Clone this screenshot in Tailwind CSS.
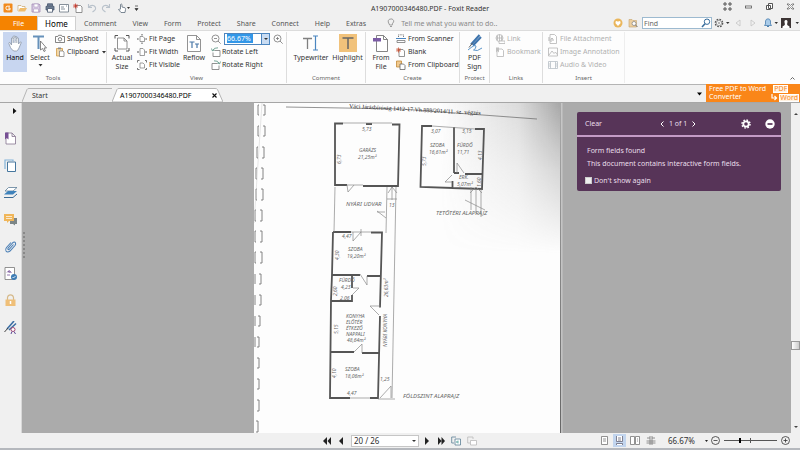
<!DOCTYPE html>
<html lang="en">
<head>
    <meta charset="UTF-8">
    <meta name="viewport" content="width=device-width, initial-scale=1.0">
    <title>A1907000346480.PDF - Foxit Reader</title>
    <script src="https://cdn.jsdelivr.net/npm/@tailwindcss/browser@4"></script>
</head>
<body class="h-screen flex flex-col overflow-hidden bg-[#f0f0f0] font-['Noto_Sans',sans-serif] text-[7px] leading-[9px] text-[#333]">

    <!-- Title bar -->
    <header class="flex h-4 shrink-0 items-center">
        <div class="flex flex-1 items-center gap-[4px] pl-[3px]">
            <svg class="w-[10px] h-[10px]" viewBox="0 0 10 10"><rect x="0.5" y="0.5" width="9" height="9" rx="1" fill="#f28a1c"/><path d="M7 3.2H4.2Q3 3.2 3 4.5v1Q3 6.8 4.2 6.8H7V5H5.2" fill="none" stroke="#fff"/></svg>
            <button aria-label="Open"><svg class="w-[10px] h-[10px]" viewBox="0 0 10 10"><path d="M1 8V2.5h3l1 1h3V5" fill="#fff" stroke="#c9a56a" stroke-width=".7"/><path d="M1 8.5L3 5h7L8 8.5z" fill="#f0bd6c"/></svg></button>
            <button aria-label="Save"><svg class="w-[10px] h-[10px]" viewBox="0 0 10 10"><path d="M1 1h7l1 1v7H1z" fill="#d9cce4" stroke="#a28bb5" stroke-width=".8"/><path d="M3 1h4v3H3zM2.5 6h5v3h-5z" fill="#fff" stroke="#a28bb5" stroke-width=".5"/></svg></button>
            <button aria-label="Print"><svg class="w-[10px] h-[10px]" viewBox="0 0 10 10"><path d="M2.5 3V.8h5V3M1 7V3.3h8V7z" fill="#6d7d92" stroke="#46566c" stroke-width=".8"/><path d="M2.5 5.5h5v3.7h-5z" fill="#fff" stroke="#46566c" stroke-width=".8"/></svg></button>
            <button aria-label="Email"><svg class="w-[10px] h-[10px]" viewBox="0 0 10 10"><path d="M.5 1.5h9v7.500h-9zM2 4h3M2 6h4M7 3h1" fill="#fff" stroke="#687480" stroke-width=".8"/></svg></button>
            <button aria-label="New"><svg class="w-[10px] h-[10px]" viewBox="0 0 10 10"><path d="M3 2.500h4.500l1.500 1.500v5.500H3z" fill="#fff" stroke="#777" stroke-width=".8"/><path d="M2.500.5v5M0 3h5M.8 1.200l3.500 3.500M4.300 1.200L.8 4.700" stroke="#c8392b" stroke-width=".8"/></svg></button>
            <button aria-label="Undo"><svg class="w-[10px] h-[10px]" viewBox="0 0 10 10"><path d="M1.500 1v3.500H5M1.800 4.300Q4 1.500 7 2.800Q10 5 7.500 7.500L5.500 9" fill="none" stroke="#b9c2cb" stroke-width="1.100"/></svg></button>
            <button aria-label="Redo"><svg class="w-[10px] h-[10px]" viewBox="0 0 10 10"><path d="M8.500 1v3.500H5M8.200 4.300Q6 1.500 3 2.800Q0 5 2.500 7.500L4.500 9" fill="none" stroke="#b9c2cb" stroke-width="1.100"/></svg></button>
            <button aria-label="Touch mode" class="ml-[2px]"><svg class="w-[13px] h-[10px]" viewBox="0 0 13 10"><path d="M3.500 6V1.500q.8-1 1.500 0V4l3 .8q.8.500.5 1.700L8 9.500H4L1.500 6.500q.3-1 2 .3" fill="#fff" stroke="#5d6c7b" stroke-width=".8"/><path d="M10 4h3l-1.500 2z" fill="#333"/></svg></button>
            <button aria-label="Customize toolbar"><svg class="w-[5px] h-[8px]" viewBox="0 0 5 8"><path d="M1 2h3M1 4.500h3L2.500 6.500z" fill="#333" stroke="#333" stroke-width=".7"/></svg></button>
        </div>
        <h1 class="pl-[62px]">A1907000346480.PDF - Foxit Reader</h1>
        <div class="flex flex-1 items-center justify-end gap-[12px] pr-[5px] pb-[3px]">
            <button aria-label="Ribbon mode"><svg class="w-[9px] h-[9px]" viewBox="0 0 9 9" fill="none" stroke="#555"><path d="M1 1h2v2H1zM6 1h2v2H6zM1 6h2v2H1zM6 6h2v2H6z"/></svg></button>
            <button aria-label="Minimize"><svg class="w-[9px] h-[9px]" viewBox="0 0 9 9"><rect x="1.500" y="4" width="6" height="2" fill="#fff" stroke="#555" stroke-width=".8"/></svg></button>
            <button aria-label="Restore"><svg class="w-[9px] h-[9px]" viewBox="0 0 9 9" fill="#fff" stroke="#555"><path d="M3.500 1.500h4v5h-4zM1.500 3.500h4v4h-4zM3 5.500h1"/></svg></button>
            <button aria-label="Close"><svg class="w-[9px] h-[9px]" viewBox="0 0 9 9"><path d="M1 2h2l1.500 1.500L6 2h2L5.700 4.500 8 7H6L4.500 5.500 3 7H1l2.300-2.500z" fill="#fff" stroke="#555" stroke-width=".7"/></svg></button>
        </div>
    </header>

    <!-- Ribbon tabs -->
    <nav class="flex h-[14px] shrink-0 items-center">
        <a href="#" class="flex h-full w-[37px] items-center justify-center bg-[#f58300] text-white">File</a>
        <a href="#" class="flex h-full w-[39px] items-center justify-center border-x border-t border-[#d0d0d0] bg-white text-[8px] text-black">Home</a>
        <div class="flex items-center gap-[16px] pl-2 text-[#555]">
            <a href="#">Comment</a>
            <a href="#">View</a>
            <a href="#">Form</a>
            <a href="#">Protect</a>
            <a href="#">Share</a>
            <a href="#">Connect</a>
            <a href="#">Help</a>
            <a href="#">Extras</a>
        </div>
        <button class="ml-[21px] flex items-center gap-[6px] text-[#888]">
            <svg class="w-[8px] h-[10px]" viewBox="0 0 8 10"><path d="M2.500 7Q2.500 6 1.500 5Q.3 2.500 2.500 1.200Q5.500 0 6.700 2.500Q7 4 5.700 5.200Q5.300 6 5.300 7zM3 8.500h2" fill="none" stroke="#888" stroke-width=".8"/></svg>
            Tell me what you want to do..
        </button>
        <div class="ml-auto flex h-full items-center">
            <button aria-label="Favorites"><svg class="mr-[5px] w-[10px] h-[10px]" viewBox="0 0 10 10"><circle cx="5" cy="5" r="4.500" fill="#eab65c"/><path d="M5 8L2.500 5.300Q2 3 3.800 3L5 3.800 6.200 3Q8 3 7.500 5.300z" fill="#fff"/></svg></button>
            <button aria-label="Search folder"><svg class="mr-[4px] w-[10px] h-[10px]" viewBox="0 0 10 10"><path d="M1 9V1.500h3l1 1h3.500V9z" fill="#edcf9f" stroke="#c6a26a" stroke-width=".6"/><circle cx="6" cy="5.500" r="2" fill="#fff" stroke="#8a8a8a" stroke-width=".8"/><path d="M7.500 7l2 2" stroke="#777"/></svg></button>
            <form class="flex h-[12px] w-[70px] items-center border border-[#9dbad0] bg-white">
                <input type="text" aria-label="Find" placeholder="Find" class="min-w-0 flex-1 pl-[1px] outline-none placeholder:text-[#666]">
                <button type="button" aria-label="Search"><svg class="w-[10px] h-[10px]" viewBox="0 0 10 10"><circle cx="6" cy="3.700" r="2.700" fill="none" stroke="#386d9c"/><path d="M4 5.700L1 9" stroke="#386d9c" stroke-width="1.500"/></svg></button>
            </form>
            <button aria-label="Settings"><svg class="ml-[2px] w-[16px] h-[10px]" viewBox="0 0 16 10"><circle cx="5" cy="5" r="3.700" fill="none" stroke="#555" stroke-width="1.300" stroke-dasharray="1.700 1.200"/><circle cx="5" cy="5" r="2.700" fill="none" stroke="#777" stroke-width=".6"/><circle cx="5" cy="5" r=".8" fill="#666"/><path d="M12 4h3.500l-1.700 2z" fill="#333"/></svg></button>
            <button aria-label="Previous result"><svg class="ml-[4px] w-[8px] h-[10px]" viewBox="0 0 8 10"><path d="M6 2v6L2 5z" fill="none" stroke="#c4c4c4" stroke-width=".8"/></svg></button>
            <button aria-label="Next result"><svg class="ml-[7px] w-[8px] h-[10px]" viewBox="0 0 8 10"><path d="M2 2v6l4-3z" fill="none" stroke="#c4c4c4" stroke-width=".8"/></svg></button>
            <button aria-label="Notifications"><svg class="ml-[6px] w-[15px] h-[10px]" viewBox="0 0 15 10"><path d="M1.500 7.500L2.500 6V3Q3 .8 5 .8T7.500 3v3l1 1.500z" fill="#a9cbe9" stroke="#4a7fae" stroke-width=".8"/><path d="M4 8.500h2" stroke="#4a7fae"/><path d="M11.500 4h3.500l-1.700 2z" fill="#333"/></svg></button>
            <button aria-label="Account"><svg class="ml-[3px] w-[19px] h-[10px]" viewBox="0 0 19 10"><path d="M0 0h10v10H0z" fill="#3c3434"/><path d="M1.500 10V8.500L3.800 7V5.500Q2.700 2 5 2T6.200 5.500V7l2.300 1.500V10z" fill="#fff"/><path d="M14.500 4H18l-1.700 2z" fill="#333"/></svg></button>
        </div>
    </nav>

    <!-- Ribbon -->
    <section class="flex h-[55px] shrink-0 border-y border-t-[#dcdcdc] border-b-[#b4b4b4] bg-[#fdfdfd] py-px">
        <div class="flex w-[107px] flex-col border-r border-[#ddd]">
            <div class="flex h-10 pl-[3px]">
                <button class="flex w-6 flex-col items-center bg-[#c8d6f0] pt-[2px]">
                    <svg class="w-[16px] h-[19px]" viewBox="0 0 16 19"><path d="M4.500 11V4q.8-1.500 1.600 0V9M6.100 5V2.500q1-1.500 1.900 0V9M8 4V2.800q1-1.300 1.800 0V9M9.800 5V4q1-1 1.700.2V10l1.700-2q1.300-.5 1 .8L12 14q-.8 2.500-2.500 3H7Q4.500 16 3.500 13.500L1.800 9.500q0-1.500 1.300-.8L4.500 11" fill="#fff" stroke="#8b98a9" stroke-width=".8"/></svg>
                    <span class="text-black">Hand</span>
                </button>
                <button class="flex w-[26px] flex-col items-center pt-[2px]">
                    <svg class="w-[16px] h-[19px]" viewBox="0 0 16 19"><path d="M1 2.500h11M6.500 2.500V15" stroke="#6791ba" stroke-width="2"/><path d="M8.500 7v9l2-1.500 1.500 3 1.300-.6L12 14h2.500z" fill="#fff" stroke="#555" stroke-width=".7"/></svg>
                    <span>Select</span>
                    <svg class="w-[5px] h-[6px]" viewBox="0 0 5 6"><path d="M.5 2h4L2.500 4.500z" fill="#333"/></svg>
                </button>
                <div class="flex flex-col pl-[2px]">
                    <button class="flex h-[13px] items-center gap-[2px]"><svg class="w-[10px] h-[10px]" viewBox="0 0 10 10"><path d="M.5 2.500h2.300L3.500 1.300h3l.7 1.200h2.300V8.500h-9z" fill="#fff" stroke="#666" stroke-width=".8"/><circle cx="5" cy="5.300" r="1.700" fill="none" stroke="#666" stroke-width=".8"/></svg>SnapShot</button>
                    <button class="flex h-[13px] items-center gap-[2px]"><svg class="w-[10px] h-[10px]" viewBox="0 0 10 10"><path d="M1.500 1.500h6v7.500h-6z" fill="#f1d7a9" stroke="#d09a45" stroke-width=".8"/><path d="M3 .5h3v1.700H3z" fill="#8a8a8a"/><path d="M4.500 4H8l1 1v4.500H4.500z" fill="#fff" stroke="#777" stroke-width=".7"/></svg>Clipboard<svg class="ml-px w-[4px] h-[4px]" viewBox="0 0 4 4"><path d="M0 1h4L2 3.500z" fill="#333"/></svg></button>
                </div>
            </div>
            <h2 class="mt-[2px] text-center text-[6px] text-[#666]">Tools</h2>
        </div>

        <div class="flex w-[180px] flex-col border-r border-[#ddd]">
            <div class="flex h-10">
                <button class="flex w-[30px] flex-col items-center pt-[2px]">
                    <svg class="w-[16px] h-[19px]" viewBox="0 0 16 19"><path d="M3.500 4h6.500l3 3v8h-9.500zM10 4v3h3" fill="#fff" stroke="#777" stroke-width=".8"/><path d="M1 4.500V1.500h3M12 1.500h3v3M1 14v3h3M12 17h3v-3" fill="none" stroke="#555"/></svg>
                    <span>Actual</span><span>Size</span>
                </button>
                <div class="flex flex-col">
                    <button class="flex h-[13px] items-center gap-[2px]"><svg class="w-[10px] h-[10px]" viewBox="0 0 10 10"><path d="M3 2.500h3l1.500 1.500v3.500H3z" fill="#fff" stroke="#777" stroke-width=".7"/><path d="M5 0v1.500M5 8.500V10M0 5h1.700M8.300 5H10" stroke="#555"/></svg>Fit Page</button>
                    <button class="flex h-[13px] items-center gap-[2px]"><svg class="w-[10px] h-[10px]" viewBox="0 0 10 10"><path d="M3 1.500h3l1.500 1.500v5.500H3z" fill="#fff" stroke="#777" stroke-width=".7"/><path d="M0 5h2M8.200 5H10" stroke="#555"/></svg>Fit Width</button>
                    <button class="flex h-[13px] items-center gap-[2px]"><svg class="w-[10px] h-[10px]" viewBox="0 0 10 10"><path d="M3 3h3l1.500 1.500V8H3z" fill="#fff" stroke="#777" stroke-width=".7"/><path d="M.5 2.500v-2h2M8 .5h1.500v2M.5 8v1.500h2M8 9.500h1.500V8" fill="none" stroke="#555" stroke-width=".8"/></svg>Fit Visible</button>
                </div>
                <button class="flex w-[28px] flex-col items-center pt-[2px]">
                    <svg class="w-[16px] h-[19px]" viewBox="0 0 16 19"><path d="M1.500 1.500h9l4 4v12h-13zM10.500 1.500v4h4" fill="#fff" stroke="#777" stroke-width=".8"/><path d="M3.500 8h5M6 8v6M9 10h4M11 10v4" stroke="#4a78a8" stroke-width="1.200"/></svg>
                    <span>Reflow</span>
                </button>
                <div class="flex flex-col pl-[3px]">
                    <div class="flex h-[13px] items-center gap-[3px]">
                        <button aria-label="Zoom out"><svg class="w-[10px] h-[10px]" viewBox="0 0 10 10" fill="none" stroke="#777" stroke-width=".8"><circle cx="4.500" cy="4.500" r="3.500"/><path d="M3 4.500h3M7 7l2.700 2.700"/></svg></button>
                        <div class="flex h-[12px] w-[46px] items-center border border-[#4d86bf] bg-white">
                            <input type="text" aria-label="Zoom level" value="66.67%" class="ml-[2px] w-[26px] bg-[#3297e8] text-white outline-none">
                            <button aria-label="Zoom presets" class="ml-auto flex h-full w-[8px] items-center justify-center border-l border-[#4d86bf] bg-[#c9dcf2]"><svg class="w-[4px] h-[4px]" viewBox="0 0 4 4"><path d="M0 1h4L2 3z" fill="#333"/></svg></button>
                        </div>
                        <button aria-label="Zoom in"><svg class="w-[10px] h-[10px]" viewBox="0 0 10 10" fill="none" stroke="#777" stroke-width=".8"><circle cx="4.500" cy="4.500" r="3.500"/><path d="M3 4.500h3M4.500 3v3M7 7l2.700 2.700"/></svg></button>
                    </div>
                    <button class="flex h-[13px] items-center gap-px"><svg class="w-[10px] h-[10px]" viewBox="0 0 10 10"><path d="M3.500 3.500H9v6H2V5.500" fill="#fff" stroke="#777" stroke-width=".8"/><path d="M7 .8Q3 .5 1.500 3.500M.5 1.500l.8 2.300L3.700 3" fill="none" stroke="#56917f" stroke-width=".8"/></svg>Rotate Left</button>
                    <button class="flex h-[13px] items-center gap-px"><svg class="w-[10px] h-[10px]" viewBox="0 0 10 10"><path d="M6.500 3.500H1v6h7V5.500" fill="#fff" stroke="#777" stroke-width=".8"/><path d="M3 .8Q7 .5 8.500 3.500M9.500 1.500l-.8 2.300L6.300 3" fill="none" stroke="#56917f" stroke-width=".8"/></svg>Rotate Right</button>
                </div>
            </div>
            <h2 class="mt-[2px] text-center text-[6px] text-[#666]">View</h2>
        </div>

        <div class="flex w-[79px] flex-col border-r border-[#ddd]">
            <div class="flex h-10 pl-[5px]">
                <button class="flex w-[38px] flex-col items-center pt-[2px]">
                    <svg class="w-[18px] h-[19px]" viewBox="0 0 18 19"><path d="M1 4.500h9M5.500 4.500V15" stroke="#808080" stroke-width="1.300"/><path d="M11 2h5M11 16h5M13.500 2v14" stroke="#4a86c0" stroke-width="1.200"/></svg>
                    <span>Typewriter</span>
                </button>
                <button class="flex w-[35px] flex-col items-center pt-[2px]">
                    <svg class="w-[18px] h-[19px]" viewBox="0 0 18 19"><path d="M0 0h18v18H0z" fill="#f1c27b"/><path d="M3.500 4h11M9 4v11" stroke="#666" stroke-width="1.500"/></svg>
                    <span>Highlight</span>
                </button>
            </div>
            <h2 class="mt-[2px] text-center text-[6px] text-[#666]">Comment</h2>
        </div>

        <div class="flex w-[94px] flex-col border-r border-[#ddd]">
            <div class="flex h-10">
                <button class="flex w-[30px] flex-col items-center pt-[2px]">
                    <svg class="w-[16px] h-[19px]" viewBox="0 0 16 19"><path d="M3.500 1.500h7l4 4v12h-11zM10.500 1.500v4h4" fill="#fff" stroke="#777" stroke-width=".9"/><path d="M0 4h8v3.500H0z" fill="#7b5ba4"/></svg>
                    <span>From</span><span>File</span>
                </button>
                <div class="flex flex-col">
                    <button class="flex h-[13px] items-center gap-[2px]"><svg class="w-[10px] h-[10px]" viewBox="0 0 10 10"><path d="M2.500 3V.8h5V3" fill="none" stroke="#777" stroke-dasharray="1 .7"/><path d="M0 4.500h10" stroke="#4a86c0"/><path d="M1 6.500h8v2H1z" fill="#fff" stroke="#777" stroke-width=".8"/></svg>From Scanner</button>
                    <button class="flex h-[13px] items-center gap-[2px]"><svg class="w-[10px] h-[10px]" viewBox="0 0 10 10"><path d="M3 2.500h4L8.500 4v5.500H3z" fill="#fff" stroke="#777" stroke-width=".8"/><path d="M2.500.5v5M0 3h5M.8 1.200l3.500 3.500M4.300 1.200L.8 4.700" stroke="#c75134" stroke-width=".8"/></svg>Blank</button>
                    <button class="flex h-[13px] items-center gap-[2px]"><svg class="w-[10px] h-[10px]" viewBox="0 0 10 10"><path d="M.5 1h5v6h-5z" fill="#f1c98e" stroke="#c28a38" stroke-width=".8"/><path d="M4 4h3.500L9 5.500v4H4z" fill="#fff" stroke="#666" stroke-width=".8"/></svg>From Clipboard</button>
                </div>
            </div>
            <h2 class="mt-[2px] text-center text-[6px] text-[#666]">Create</h2>
        </div>

        <div class="flex w-[30px] flex-col border-r border-[#ddd]">
            <button class="flex h-10 flex-col items-center pt-[2px]">
                <svg class="h-[19px] w-[16px] shrink-0" viewBox="0 0 16 19"><path d="M12.500 1L4 10.500M14 3L6 11.500" stroke="#3e74ad" stroke-width="2"/><path d="M5.500 9L2 13.500" stroke="#666"/><path d="M1 16Q8 10 9 12Q9 15 6.500 16Q10 18 15 14" fill="none" stroke="#5b95c9"/></svg>
                <span>PDF</span><span>Sign</span>
            </button>
            <h2 class="mt-[2px] text-center text-[6px] text-[#666]">Protect</h2>
        </div>

        <div class="flex w-[53px] flex-col border-r border-[#ddd]">
            <div class="flex h-10 flex-col pl-[5px] text-[#b0b0b0]">
                <button class="flex h-[13px] items-center gap-[2px]" disabled><svg class="w-[10px] h-[10px]" viewBox="0 0 10 10" fill="none" stroke="#b5b5b5" stroke-width=".8"><circle cx="4.500" cy="4" r="3.500"/><path d="M1 4h7M4.500.5v7M2.500 1.500v5M6.500 1.500v5"/><path d="M4 7h6v2.500H4z" fill="#fff"/></svg>Link</button>
                <button class="flex h-[13px] items-center gap-[2px]" disabled><svg class="w-[10px] h-[10px]" viewBox="0 0 10 10"><path d="M2 2h5l1.500 1.500v6H2z" fill="#fff" stroke="#b5b5b5" stroke-width=".8"/><path d="M1 .5h3v5L2.500 4 1 5.500z" fill="#c0c0c0"/></svg>Bookmark</button>
            </div>
            <h2 class="mt-[2px] text-center text-[6px] text-[#666]">Links</h2>
        </div>

        <div class="flex w-[82px] flex-col border-r border-[#eee]">
            <div class="flex h-10 flex-col pl-[5px] text-[#b0b0b0]">
                <button class="flex h-[13px] items-center gap-[2px]" disabled><svg class="w-[10px] h-[10px]" viewBox="0 0 10 10"><path d="M2 .5h4.500L8.500 2.500v7H2z" fill="#fff" stroke="#b5b5b5" stroke-width=".8"/><path d="M3 8V5q1-1.500 2 0v2M1 3v4" fill="none" stroke="#b5b5b5"/></svg>File Attachment</button>
                <button class="flex h-[13px] items-center gap-[2px]" disabled><svg class="w-[10px] h-[10px]" viewBox="0 0 10 10"><path d="M.5 1h9v8h-9zM1 8l3-4 2 2.500L7.500 5 9 7.500" fill="none" stroke="#b5b5b5" stroke-width=".8"/></svg>Image Annotation</button>
                <button class="flex h-[13px] items-center gap-[2px]" disabled><svg class="w-[10px] h-[10px]" viewBox="0 0 10 10"><path d="M.5 1.500h9v7h-9zM2.500 1.500v7M7.500 1.500v7M.5 4h2M.5 6h2M7.500 4h2M7.500 6h2" fill="none" stroke="#b9c0c6" stroke-width=".8"/></svg>Audio &amp; Video</button>
            </div>
            <h2 class="mt-[2px] text-center text-[6px] text-[#666]">Insert</h2>
        </div>
        <button aria-label="Collapse ribbon" class="mt-auto mr-[5px] mb-[2px] ml-auto"><svg class="w-[5px] h-[5px]" viewBox="0 0 5 5"><path d="M.5 3.500l2-2 2 2" fill="none" stroke="#666"/></svg></button>
    </section>

    <!-- Document tabs -->
    <div class="flex h-[18px] shrink-0 items-end border-b border-[#a6a6a6] pl-[22px]">
        <button class="relative h-[14px] w-[90px] pl-[10px] text-left">
            <svg class="absolute inset-0 h-full w-full" viewBox="0 0 90 14" preserveAspectRatio="none"><path d="M0 14L5 1.500Q5.500.5 7 .5H90" fill="none" stroke="#b5b5b5"/></svg>
            <span class="relative">Start</span>
        </button>
        <div class="relative flex h-[14px] w-[111px] items-center justify-between pr-[6px] pl-[8px]">
            <svg class="absolute inset-0 h-full w-full" viewBox="0 0 111 14" preserveAspectRatio="none"><path d="M0 14L5 1.500Q5.500.5 7 .5H103Q105 .5 105.500 1.500L111 14z" fill="#fff" stroke="#b5b5b5"/></svg>
            <span class="relative text-black">A1907000346480.PDF</span>
            <button aria-label="Close tab" class="relative"><svg class="w-[5px] h-[5px]" viewBox="0 0 5 5"><path d="M.5.5l4 4M4.500.5l-4 4" stroke="#111" stroke-width="1.100"/></svg></button>
        </div>
        <button aria-label="Tab list" class="ml-auto self-center pr-[4px]"><svg class="w-[5px] h-[4px]" viewBox="0 0 5 4"><path d="M0 .5h5L2.500 3.500z" fill="#000"/></svg></button>
        <a href="#" class="flex h-[18px] w-[94px] items-center justify-between bg-[#fa8619] pr-px pl-[3px] leading-[8px] text-white">
            <span>Free PDF to Word<br>Converter</span>
            <span class="flex flex-col gap-px text-[#fa8619]">
                <span class="mr-auto border border-white bg-[#fff1e0] leading-[6px]">PDF</span>
                <span class="-ml-[2px] flex items-center gap-px"><svg class="w-[7px] h-[7px]" viewBox="0 0 7 7"><path d="M1 0v4h4M3.500 2L5.500 4 3.500 6" fill="none" stroke="#fff" stroke-width="1.200"/></svg><span class="border border-white bg-[#fff1e0] leading-[6px]">Word</span></span>
            </span>
        </a>
    </div>

    <main class="flex min-h-0 flex-1">
        <!-- Side panels -->
        <aside class="flex w-[22px] shrink-0 flex-col items-center gap-[14px] border-r border-[#d8d8d8] pt-[5px]">
            <button aria-label="Expand panel" class="mb-[4px] ml-[8px]"><svg class="w-[4px] h-[6px]" viewBox="0 0 4 6"><path d="M0 0v6l3.500-3z" fill="#111"/></svg></button>
            <button aria-label="Bookmarks"><svg class="w-[13px] h-[13px]" viewBox="0 0 13 13"><path d="M2 1h6l3.500 3.500V12H2zM8 1v3.500h3.500" fill="#fff" stroke="#85738f" stroke-width=".8"/><path d="M1 .5h3.500v7L2.700 6 1 7.500z" fill="#764f94"/></svg></button>
            <button aria-label="Pages"><svg class="w-[13px] h-[13px]" viewBox="0 0 13 13"><path d="M1 10V1h8v1" fill="none" stroke="#83b4da" stroke-width="1.200"/><path d="M3.500 3h8v9.500h-8z" fill="#fff" stroke="#46779e"/></svg></button>
            <button aria-label="Layers"><svg class="w-[13px] h-[13px]" viewBox="0 0 13 13"><path d="M4.500 1.500H13L9 5H1z" fill="#fff" stroke="#5d7d98" stroke-width=".8"/><path d="M4 5h9L9 8.500H0z" fill="#3e82bb"/><path d="M0 11.500h9L13 8" fill="none" stroke="#3c6b94"/></svg></button>
            <button aria-label="Comments"><svg class="w-[13px] h-[13px]" viewBox="0 0 13 13"><path d="M6 5h7v6h-2v1.500L9 11H6z" fill="#7c8587"/><path d="M0 1h10v7H5L3 10V8H0z" fill="#f0b65a"/><path d="M2 3.500h6M2 5.500h6" stroke="#fff" stroke-width=".7"/></svg></button>
            <button aria-label="Attachments"><svg class="w-[13px] h-[13px]" viewBox="0 0 13 13"><path d="M9.500 4.500L5 9.500Q3.500 10 4 8.200L8.500 3Q10.500 1 11.500 3Q12 4 11 5.500L6 11Q3.500 13 2 11Q1 9.500 2.500 7.500L7 2.500" fill="none" stroke="#497eb5" stroke-width="1.100"/></svg></button>
            <button aria-label="Signatures"><svg class="w-[13px] h-[13px]" viewBox="0 0 13 13"><path d="M1 .5h9.500v12H1z" fill="#fff" stroke="#777" stroke-width=".8"/><path d="M3 5.500Q5 2 6.500 4.500Q5 6 4 4.500L7.500 5.500M3 8h3" fill="none" stroke="#77539a" stroke-width=".8"/><circle cx="10" cy="10" r="3" fill="#3e7cb5"/><path d="M8.500 10l1 1 2-2" fill="none" stroke="#fff" stroke-width=".8"/></svg></button>
            <button aria-label="Security"><svg class="w-[13px] h-[13px]" viewBox="0 0 13 13"><path d="M3.500 6V3.500Q4 .8 6.500.8T9.500 3.500V6" fill="none" stroke="#d5b98a" stroke-width="1.200"/><path d="M1.500 5.500h10V12h-10z" fill="#efbf78"/><path d="M6.500 7v3" stroke="#fff" stroke-width="1.500"/></svg></button>
            <button aria-label="Certificates"><svg class="w-[13px] h-[13px]" viewBox="0 0 13 13"><path d="M10 0L3 8M12 2.500L5 9" stroke="#3d6fa5" stroke-width="1.600"/><path d="M4 7l-3.500 4" stroke="#444"/><circle cx="9" cy="8.500" r="2" fill="#fff" stroke="#a84b76"/><path d="M8 10.500L7 13M10 10.500L11.500 13" stroke="#5d4c96"/></svg></button>
        </aside>

        <!-- Document -->
        <div class="relative flex min-w-0 flex-1 justify-center bg-[#ababab] pl-[3px]">
            <div class="absolute top-[129px] left-[1px] h-[26px] w-[2px] border-l-2 border-dotted border-[#888]"></div>
            <svg class="h-full" viewBox="254 103 309 330" role="img" aria-label="Scanned floor plan">
                <defs>
                    <linearGradient id="shade" x1="0" x2="1" y1="0" y2="0"><stop offset="0" stop-color="#777" stop-opacity="0"/><stop offset=".65" stop-color="#777" stop-opacity=".25"/><stop offset="1" stop-color="#777" stop-opacity=".65"/></linearGradient>
                    <linearGradient id="fade" x1="0" x2="0" y1="0" y2="1"><stop offset="0" stop-color="#fff"/><stop offset=".45" stop-color="#fff" stop-opacity=".45"/><stop offset="1" stop-color="#fff" stop-opacity="0"/></linearGradient>
                    <mask id="corner"><path d="M400 103h163v150H400z" fill="url(#fade)"/></mask>
                    <linearGradient id="edge" x1="0" x2="0" y1="0" y2="1"><stop offset="0" stop-color="#aaa"/><stop offset="1" stop-color="#666"/></linearGradient>
                </defs>
                <path d="M254 103h309v330H254z" fill="#fdfdfd"/>
                <path d="M440 103h121v150H440z" fill="url(#shade)" mask="url(#corner)"/>
                <path d="M560 103h1.300v330H560z" fill="url(#edge)"/>
                <path d="M561.300 103h1.700v330h-1.700z" fill="#b9b9b9"/>
                <!-- Binding holes -->
                <g fill="none" stroke="#777" stroke-width=".9">
                    <path d="M259 105h-1v10h1M263 105h2v10h-2M259 126h-1v10h1M263 126h2v10h-2M258 147h-1v11h1M262 147h2v11h-2M257 168h-1v11h1M261 168h2v11h-2M257 189h-1v11h1M261 189h2v11h-2M256 210h-1v11h1M260 210h2v11h-2M256 231h-1v11h1M260 231h2v11h-2M256 252h-1v11h1M260 252h2v11h-2M255 274v10M259 274h2v10h-2M255 295v10M259 295h2v10h-2M255 316v10M258 316h2v10h-2M255 337v10M257 337h2v10h-2M257 358h2v10h-2M257 379h2v10h-2M257 400h2v11h-2M256 421h2v11h-2"/>
                    <path d="M262 103l-8 120" stroke="#ccc" stroke-width=".5"/>
                </g>
                <path d="M286 107l115 2 136 10" fill="none" stroke="#666" stroke-width=".7"/>
                <text x="349" y="108" transform="rotate(3 349 108)" font-family="Liberation Serif" font-size="6" fill="#222">Váci Járásbíróság 1412-17.Vh.888/2014/11. sz. végzés</text>
                <!-- Walls -->
                <g fill="none" stroke="#555" stroke-width="1.800">
                    <path d="M343 123.500h-8L335 185h12M366 124h6M392 124.500h7.500L398 186h-35"/>
                    <path d="M432 126h-10l-1.500 61 32 1v-7M454 127v46M475 129h9l-2 60-30-1M454 173h5M465 174h18"/>
                    <path d="M333 232h18M371 232.500h11l-2 75M380 316l-2 82h-8M333 232l-1 43-1 25-1 98h20M332 275h28M367 276h13M352 275v13M352 295v7M331 301h21M331 352h23M362 353h18"/>
                </g>
                <g fill="none" stroke="#888" stroke-width=".7">
                    <path d="M343 123h49M432 126l43 3M347 185h16M347 185l1 7 6-7M335 187l-1 45M387 187l-1 46M396 187l-4 211M387 199h10M386 218l-9-7M377 212h8M388 193l4-6 5 6M392 187v13"/>
                    <path d="M457 163v10M457 163l7 10M445 182h7M445 182l7-7M471 187v23M476 189v24M481 189v28M465 200l20 10M470 193l6-6 6 6"/>
                    <path d="M351 232h20M353 232v9l8-9M361 229v7M360 274l7 11V276M353 288h6l-7 7M370 306h10M370 306l9 9M354 352l8-8v9M350 398h20M378 399h17M380 398l11-12v12"/>
                </g>
                <!-- Room notes -->
                <g font-family="Noto Sans, sans-serif" font-style="italic" font-size="5" fill="#666">
                    <text x="362" y="131">5,73</text>
                    <text x="359" y="152">GARÁZS</text>
                    <text x="358" y="159">21,25m²</text>
                    <text x="431" y="133">3,07</text>
                    <text x="462" y="133">3,15</text>
                    <text x="430" y="147">SZOBA</text>
                    <text x="429" y="154">16,61m²</text>
                    <text x="457" y="147">FÜRDŐ</text>
                    <text x="457" y="154">11,71</text>
                    <text x="459" y="179">ERK.</text>
                    <text x="457" y="186">5,07m²</text>
                    <text x="346" y="206" font-size="6">NYÁRI UDVAR</text>
                    <text x="389" y="207">13</text>
                    <text x="436" y="215" font-size="6">TETŐTÉRI ALAPRAJZ</text>
                    <text x="342" y="238">4,47</text>
                    <text x="348" y="251">SZOBA</text>
                    <text x="347" y="258">19,20m²</text>
                    <text x="339" y="282">FÜRDŐ</text>
                    <text x="341" y="289">4,23</text>
                    <text x="340" y="300">2,06</text>
                    <text x="346" y="318">KONYHA</text>
                    <text x="346" y="324">ELŐTÉR</text>
                    <text x="346" y="330">ÉTKEZŐ</text>
                    <text x="346" y="336">NAPPALI</text>
                    <text x="347" y="342">48,64m²</text>
                    <text x="345" y="371">SZOBA</text>
                    <text x="345" y="378">18,06m²</text>
                    <text x="347" y="395">4,47</text>
                    <text x="380" y="381">1,25</text>
                    <text x="403" y="398" font-size="6">FÖLDSZINT ALAPRAJZ</text>
                    <text transform="translate(341 164) rotate(-90)">6,73</text>
                    <text transform="translate(426 166) rotate(-90)">5,73</text>
                    <text transform="translate(482 160) rotate(-90)">4,13</text>
                    <text transform="translate(481 187) rotate(-90)">1,60</text>
                    <text transform="translate(339 260) rotate(-90)">4,30</text>
                    <text transform="translate(337 296) rotate(-90)">2,60</text>
                    <text transform="translate(338 334) rotate(-90)">5,15</text>
                    <text transform="translate(336 378) rotate(-90)">4,10</text>
                    <text transform="translate(388 297) rotate(-90)">26,63m²</text>
                    <text transform="translate(387 347) rotate(-90)">NYÁRI KONYHA</text>
                </g>
            </svg>

            <!-- Form fields message -->
            <section class="absolute top-[9px] right-[10px] w-[204px] rounded-[2px] bg-[#573458] text-[#eadfeb]">
                <div class="flex h-[25px] items-center border-b-2 border-[#c49bc6] pr-[6px] pl-2">
                    <button class="w-[75px] text-left">Clear</button>
                    <div class="flex items-center gap-[5px]">
                        <button aria-label="Previous message"><svg class="w-[4px] h-[6px]" viewBox="0 0 4 6"><path d="M3.500.5L1 3l2.500 2.500" fill="none" stroke="#fff"/></svg></button>
                        <span>1 of 1</span>
                        <button aria-label="Next message"><svg class="w-[4px] h-[6px]" viewBox="0 0 4 6"><path d="M.5.5L3 3 .5 5.500" fill="none" stroke="#fff"/></svg></button>
                    </div>
                    <button aria-label="Message settings" class="ml-auto"><svg class="w-[10px] h-[10px]" viewBox="0 0 10 10"><circle cx="5" cy="5" r="2.700" fill="none" stroke="#fff" stroke-width="1.800"/><circle cx="5" cy="5" r="4" fill="none" stroke="#fff" stroke-width="1.500" stroke-dasharray="1.600 1.540"/></svg></button>
                    <button aria-label="Minimize message" class="ml-[14px]"><svg class="w-[10px] h-[10px]" viewBox="0 0 10 10"><circle cx="5" cy="5" r="4.700" fill="#fff"/><path d="M2.500 5h5" stroke="#573458" stroke-width="1.700"/></svg></button>
                </div>
                <div class="flex flex-col gap-[4px] px-[10px] pt-[9px] pb-[6px]">
                    <h2>Form fields found</h2>
                    <p>This document contains interactive form fields.</p>
                    <label class="mt-[4px] -ml-[2px] flex items-center gap-[2px]"><input type="checkbox" class="h-[7px] w-[7px] appearance-none border border-[#ccc] bg-[#eee]">Don't show again</label>
                </div>
            </section>
        </div>

        <!-- Scrollbar -->
        <div class="flex w-[9px] shrink-0 flex-col items-center bg-[#f0f0f0] py-[4px]">
            <svg class="mt-[5px] w-[4px] h-[4px]" viewBox="0 0 4 4"><path d="M0 3l2-2 2 2z" fill="#444"/></svg>
            <div class="flex-[225]"></div>
            <div class="h-[9px] w-full border border-[#999] bg-linear-to-r from-white to-[#ccc]"></div>
            <div class="flex-[75]"></div>
            <svg class="w-[4px] h-[4px]" viewBox="0 0 4 4"><path d="M0 1l2 2 2-2z" fill="#444"/></svg>
        </div>
    </main>

    <!-- Status bar -->
    <footer class="flex h-[17px] shrink-0 items-center border-b-2 border-[#b5b8bd] px-[10px]">
        <div class="flex-1"></div>
        <div class="flex items-center gap-[6px]">
            <button aria-label="First page"><svg class="w-[8px] h-[8px]" viewBox="0 0 8 8"><path d="M4 0v8L0 4zM8 0v8L4.500 4z" fill="#222"/></svg></button>
            <button aria-label="Previous page"><svg class="w-[8px] h-[8px]" viewBox="0 0 8 8"><path d="M6 0v8L2 4z" fill="#222"/></svg></button>
            <div class="flex h-[12px] w-[68px] items-center border border-[#c6c6c6] bg-white pr-[2px] text-[8px]">
                <input type="text" aria-label="Page" value="20 / 26" class="min-w-0 flex-1 pl-[2px] outline-none">
                <button aria-label="Choose page"><svg class="w-[4px] h-[4px]" viewBox="0 0 4 4"><path d="M0 1h4L2 3z" fill="#333"/></svg></button>
            </div>
            <button aria-label="Next page"><svg class="w-[6px] h-[8px]" viewBox="0 0 6 8"><path d="M0 0v8l4-4z" fill="#222"/></svg></button>
            <button aria-label="Last page"><svg class="w-[8px] h-[8px]" viewBox="0 0 8 8"><path d="M1 0v8l3.500-4zM4.500 0v8L8 4z" fill="#222"/></svg></button>
            <button aria-label="Previous view"><svg class="w-[10px] h-[10px]" viewBox="0 0 10 10"><path d="M5 1H.7v6H3" fill="none" stroke="#5b7f94" stroke-width=".8"/><path d="M4 3h5.500v6H4z" fill="#fff" stroke="#5b7f94" stroke-width=".8"/><path d="M8 6H5.500M7 4.500L5.500 6 7 7.500" fill="none" stroke="#4a9a95" stroke-width=".8"/></svg></button>
            <button aria-label="Next view"><svg class="w-[10px] h-[10px]" viewBox="0 0 10 10" fill="none" stroke="#b9b9b9" stroke-width=".8"><path d="M6 3V1H.7v6H3"/><path d="M3.500 4.500h6V9h-6z" fill="#fff"/></svg></button>
        </div>
        <div class="flex flex-1 items-center justify-end">
            <button aria-label="Single page" class="mr-[2px] p-[2px]"><svg class="w-[9px] h-[9px]" viewBox="0 0 9 9"><path d="M1.500.5h6v8h-6zM3 3h3M3 5h3" fill="#fff" stroke="#777" stroke-width=".8"/></svg></button>
            <button aria-label="Continuous" class="bg-[#c2d5ee] p-[2px]"><svg class="w-[9px] h-[9px]" viewBox="0 0 9 9"><path d="M1.500 0v5.500h6V0M1.500 9V7.500h6V9M3 2h3M3 4h3" fill="#fff" stroke="#667" stroke-width=".8"/></svg></button>
            <button aria-label="Facing" class="ml-[2px] p-[2px]"><svg class="w-[10px] h-[9px]" viewBox="0 0 10 9"><path d="M.5.5h4v8h-4zM5.500.5h4v8h-4zM7 3h1M7 5h1" fill="#fff" stroke="#777" stroke-width=".8"/></svg></button>
            <button aria-label="Continuous facing" class="ml-[2px] p-[2px]"><svg class="w-[10px] h-[9px]" viewBox="0 0 10 9"><path d="M4 0v9M6 0v9M.5 5h9M.5 7h9M1 2h3M6 2h3" stroke="#777" stroke-width=".8"/></svg></button>
            <button class="ml-[10px] flex items-center gap-[10px] text-[8px]">66.67%<svg class="w-[3px] h-[4px]" viewBox="0 0 3 4"><path d="M0 1h3L1.500 3z" fill="#222"/></svg></button>
            <button aria-label="Zoom out" class="ml-[3px]"><svg class="w-[9px] h-[9px]" viewBox="0 0 9 9" fill="none" stroke="#333" stroke-width=".8"><circle cx="4.500" cy="4.500" r="4"/><path d="M2.500 4.500h4"/></svg></button>
            <div class="mx-[4px] flex w-[53px] items-center bg-[linear-gradient(#555,#555)] bg-[length:1px_5px] bg-center bg-no-repeat py-[2px]">
                <input type="range" aria-label="Zoom" min="0" max="100" value="30" class="h-px w-full appearance-none bg-[#555] [&::-webkit-slider-thumb]:h-[5px] [&::-webkit-slider-thumb]:w-[2px] [&::-webkit-slider-thumb]:appearance-none [&::-webkit-slider-thumb]:bg-black">
            </div>
            <button aria-label="Zoom in"><svg class="w-[9px] h-[9px]" viewBox="0 0 9 9" fill="none" stroke="#333" stroke-width=".8"><circle cx="4.500" cy="4.500" r="4"/><path d="M2.500 4.500h4M4.500 2.500v4"/></svg></button>
        </div>
    </footer>
</body>
</html>
